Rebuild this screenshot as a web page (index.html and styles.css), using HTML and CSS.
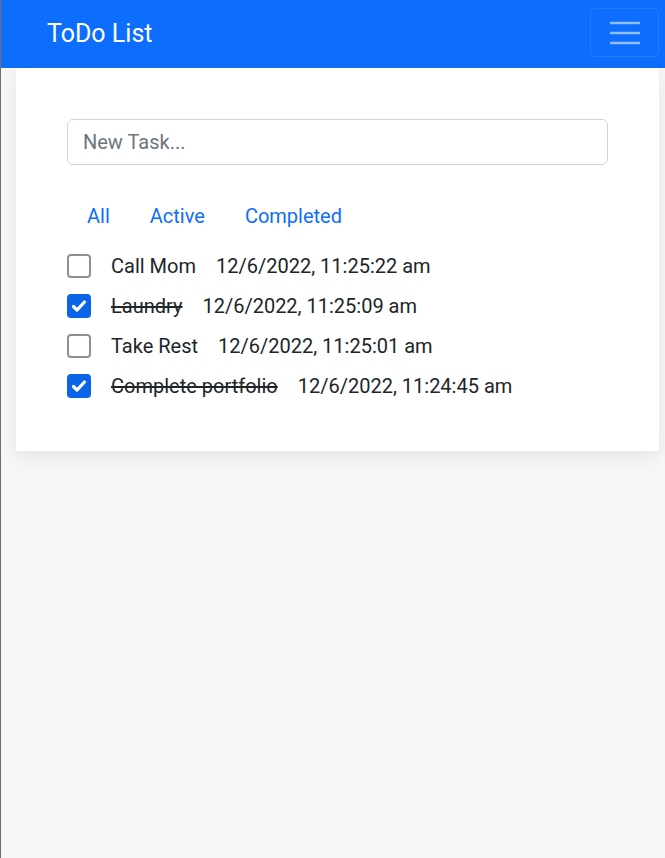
FILE: index.html
```html
<!DOCTYPE html>
<html lang="en">
<head>
<meta charset="utf-8">
<title>ToDo List</title>
<link rel="stylesheet" href="styles.css">
</head>
<body>
<nav class="navbar">
  <span class="brand">ToDo List</span>
  <button class="toggler" aria-label="Toggle navigation">
    <svg width="30" height="30" viewBox="0 0 30 30"><path d="M1 5h28M1 15h28M1 25h28" stroke="rgba(255,255,255,0.55)" stroke-width="2.6" stroke-linecap="round" fill="none"/></svg>
  </button>
</nav>
<main class="card">
  <input class="task-input" type="text" placeholder="New Task...">
  <div class="filters">
    <a class="filter" href="#">All</a>
    <a class="filter" href="#">Active</a>
    <a class="filter" href="#">Completed</a>
  </div>
  <ul class="tasks">
    <li class="task"><span class="box"></span><span class="name">Call Mom</span><span class="date">12/6/2022, 11:25:22 am</span></li>
    <li class="task done"><span class="box checked"><svg viewBox="0 0 24 24" width="24" height="24"><path d="M6.5 12.5l3.5 3.5 7.5-8" stroke="#fff" stroke-width="3.2" fill="none" stroke-linecap="round" stroke-linejoin="round"/></svg></span><span class="name">Laundry</span><span class="date">12/6/2022, 11:25:09 am</span></li>
    <li class="task"><span class="box"></span><span class="name">Take Rest</span><span class="date">12/6/2022, 11:25:01 am</span></li>
    <li class="task done"><span class="box checked"><svg viewBox="0 0 24 24" width="24" height="24"><path d="M6.5 12.5l3.5 3.5 7.5-8" stroke="#fff" stroke-width="3.2" fill="none" stroke-linecap="round" stroke-linejoin="round"/></svg></span><span class="name">Complete portfolio</span><span class="date">12/6/2022, 11:24:45 am</span></li>
  </ul>
</main>
</body>
</html>
```

FILE: styles.css
```css
* { box-sizing: border-box; }
html, body { margin: 0; padding: 0; }
body {
  min-height: 100vh;
  background: #f7f7f7;
  border-left: 1px solid #6e6e6e;
  font-family: Roboto, "Liberation Sans", sans-serif;
  font-size: 20px;
  color: #212529;
}
.navbar {
  height: 68px;
  background: #0d6efd;
  display: flex;
  justify-content: space-between;
  align-items: flex-start;
  padding: 0 6px 0 46px;
}
.brand {
  color: #fff;
  font-size: 25px;
  line-height: 68px;
}
.toggler {
  margin-top: 8px;
  width: 69px;
  height: 49px;
  border: 1px solid rgba(255,255,255,0.1);
  border-radius: 6px;
  background: transparent;
  display: flex;
  align-items: center;
  justify-content: center;
  padding: 0;
}
.toggler svg { display: block; }
.card {
  display: block;
  margin: 0 6px 0 15px;
  background: #fff;
  padding: 51px 51px 45px;
  box-shadow: 0 6px 18px rgba(0,0,0,0.08);
}
.task-input {
  display: block;
  width: 100%;
  height: 46px;
  border: 1px solid #ced4da;
  border-radius: 6px;
  padding: 0 15px;
  font-family: inherit;
  font-size: 20px;
  color: #212529;
  outline: none;
}
.task-input::placeholder { color: #6c757d; }
.filters {
  display: flex;
  margin-top: 26px;
}
.filter {
  color: #0d6efd;
  text-decoration: none;
  padding: 10px 20px;
  line-height: 30px;
}
.tasks {
  list-style: none;
  margin: 5px 0 0;
  padding: 0;
}
.task {
  height: 40px;
  display: flex;
  align-items: center;
}
.box {
  width: 24px;
  height: 24px;
  border: 2px solid #8f8f8f;
  border-radius: 4px;
  margin-right: 20px;
  flex: none;
  display: flex;
  align-items: center;
  justify-content: center;
}
.box.checked {
  border: none;
  background: #0b63e5;
}
.box svg { display: block; }
.name { margin-right: 20px; }
.done .name { text-decoration: line-through; }
```
